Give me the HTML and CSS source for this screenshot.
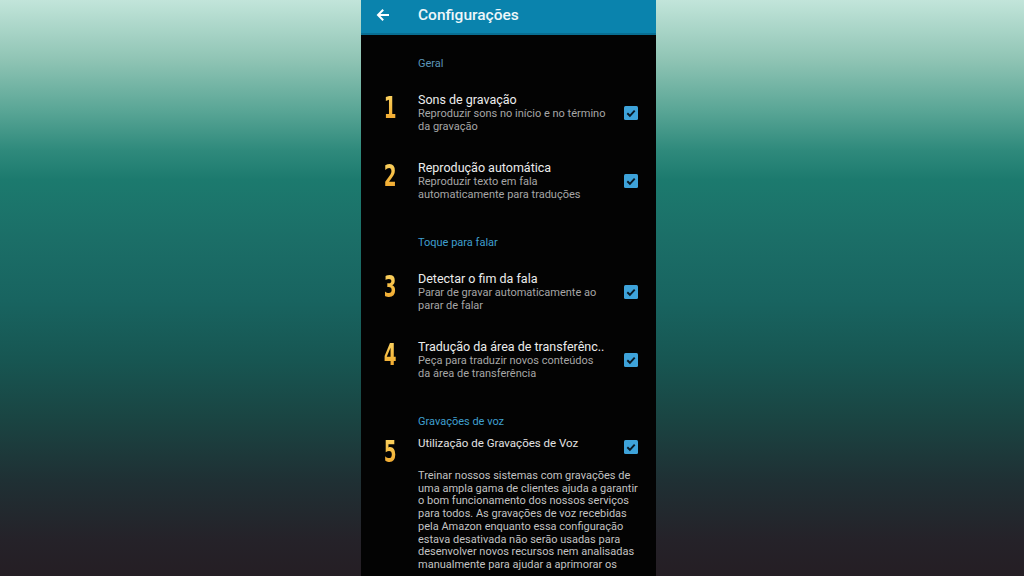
FILE: index.html
```html
<!DOCTYPE html>
<html lang="pt-BR">
<head>
<meta charset="utf-8">
<title>Configurações</title>
<link rel="stylesheet" href="styles.css">
</head>
<body>
<div class="screen">
  <header class="appbar">
    <svg class="back" width="14" height="14" viewBox="0 0 14 14" aria-hidden="true">
      <path d="M13 7H2.2M7.2 1.8L2 7l5.2 5.2" fill="none" stroke="#fff" stroke-width="2" stroke-linecap="butt" stroke-linejoin="miter"/>
    </svg>
    <h1 class="appbar-title">Configurações</h1>
  </header>

  <main class="list">
    <div class="section-label section-first">Geral</div>

    <div class="item">
      <span class="num">1</span>
      <div class="text">
        <div class="title">Sons de gravação</div>
        <div class="sub">Reproduzir sons no início e no término<br>da gravação</div>
      </div>
      <span class="check"><svg width="14" height="14" viewBox="0 0 14 14"><rect width="14" height="14" rx="1.5" fill="#3ea3da"/><path d="M3.3 7.3L5.9 9.8L10.7 4.6" fill="none" stroke="#0a1a26" stroke-width="1.9"/></svg></span>
    </div>

    <div class="item">
      <span class="num">2</span>
      <div class="text">
        <div class="title">Reprodução automática</div>
        <div class="sub">Reproduzir texto em fala<br>automaticamente para traduções</div>
      </div>
      <span class="check"><svg width="14" height="14" viewBox="0 0 14 14"><rect width="14" height="14" rx="1.5" fill="#3ea3da"/><path d="M3.3 7.3L5.9 9.8L10.7 4.6" fill="none" stroke="#0a1a26" stroke-width="1.9"/></svg></span>
    </div>

    <div class="section-label">Toque para falar</div>

    <div class="item">
      <span class="num">3</span>
      <div class="text">
        <div class="title">Detectar o fim da fala</div>
        <div class="sub">Parar de gravar automaticamente ao<br>parar de falar</div>
      </div>
      <span class="check"><svg width="14" height="14" viewBox="0 0 14 14"><rect width="14" height="14" rx="1.5" fill="#3ea3da"/><path d="M3.3 7.3L5.9 9.8L10.7 4.6" fill="none" stroke="#0a1a26" stroke-width="1.9"/></svg></span>
    </div>

    <div class="item">
      <span class="num">4</span>
      <div class="text">
        <div class="title">Tradução da área de transferênc..</div>
        <div class="sub">Peça para traduzir novos conteúdos<br>da área de transferência</div>
      </div>
      <span class="check"><svg width="14" height="14" viewBox="0 0 14 14"><rect width="14" height="14" rx="1.5" fill="#3ea3da"/><path d="M3.3 7.3L5.9 9.8L10.7 4.6" fill="none" stroke="#0a1a26" stroke-width="1.9"/></svg></span>
    </div>

    <div class="section-label">Gravações de voz</div>

    <div class="item item-long">
      <span class="num">5</span>
      <div class="title title-small">Utilização de Gravações de Voz</div>
      <span class="check check-top"><svg width="14" height="14" viewBox="0 0 14 14"><rect width="14" height="14" rx="1.5" fill="#3ea3da"/><path d="M3.3 7.3L5.9 9.8L10.7 4.6" fill="none" stroke="#0a1a26" stroke-width="1.9"/></svg></span>
      <p class="para">Treinar nossos sistemas com gravações de<br>uma ampla gama de clientes ajuda a garantir<br>o bom funcionamento dos nossos serviços<br>para todos. As gravações de voz recebidas<br>pela Amazon enquanto essa configuração<br>estava desativada não serão usadas para<br>desenvolver novos recursos nem analisadas<br>manualmente para ajudar a aprimorar os</p>
    </div>
  </main>
</div>
</body>
</html>
```

FILE: styles.css
```css
html, body {
  margin: 0;
  padding: 0;
}

body {
  width: 1024px;
  height: 576px;
  overflow: hidden;
  font-family: Roboto, "Noto Sans", "Liberation Sans", sans-serif;
  background: linear-gradient(to bottom,
    #c2e5da 0px,
    #8fc4b4 60px,
    #5aa696 110px,
    #2f8a7c 150px,
    #1c7a6e 180px,
    #1b6e67 240px,
    #186460 300px,
    #175652 360px,
    #1a4442 420px,
    #1f3034 480px,
    #252229 540px,
    #251e24 576px);
}

.screen {
  width: 295px;
  height: 576px;
  margin-left: 361px;
  background: #030303;
  overflow: hidden;
}

.appbar {
  height: 35px;
  box-sizing: border-box;
  background: #0a83ad;
  border-bottom: 2px solid #086e92;
  display: flex;
  align-items: center;
  padding: 0 0 4px 15px;
}

.back {
  display: block;
  flex: none;
}

.appbar-title {
  margin: 0 0 0 28px;
  font-size: 15.5px;
  font-weight: 500;
  color: #eef7fa;
  line-height: 18px;
}

.list {
  padding: 22px 18px 0 0;
}

.section-label {
  padding-left: 57px;
  font-size: 11px;
  line-height: 14px;
  color: #3f9fcf;
  margin: 22px 0 7px;
}

.section-first {
  margin-top: 0;
  color: #5b95b8;
}

.item {
  display: grid;
  grid-template-columns: 57px 196px 1fr;
  align-items: center;
  padding: 14px 0 13px;
}

.num {
  align-self: start;
  justify-self: center;
  font-family: "DejaVu Sans Condensed", "DejaVu Sans", sans-serif;
  font-weight: bold;
  font-size: 31px;
  line-height: 1;
  height: 30px;
  transform: scaleX(0.66);
  padding-left: 3px;
  background: linear-gradient(to bottom, #fcd768 0%, #f5b93e 60%, #f0a52e 100%);
  -webkit-background-clip: text;
  background-clip: text;
  color: transparent;
}

.title {
  font-size: 12.5px;
  line-height: 15px;
  color: #ececec;
  white-space: nowrap;
}

.title-small {
  font-size: 11.5px;
  color: #e2e2e2;
}

.sub {
  font-size: 11px;
  line-height: 13px;
  color: #a6a6a6;
  white-space: nowrap;
}

.check {
  justify-self: end;
  display: block;
  height: 14px;
}

.check svg {
  display: block;
}

.item-long {
  padding-top: 0;
  align-items: start;
}

.check-top {
  margin-top: 4px;
}

.para {
  grid-column: 2 / 4;
  margin: 4px 0 0;
  font-size: 11px;
  line-height: 12.7px;
  color: #c2c2c2;
  white-space: nowrap;
}
```
